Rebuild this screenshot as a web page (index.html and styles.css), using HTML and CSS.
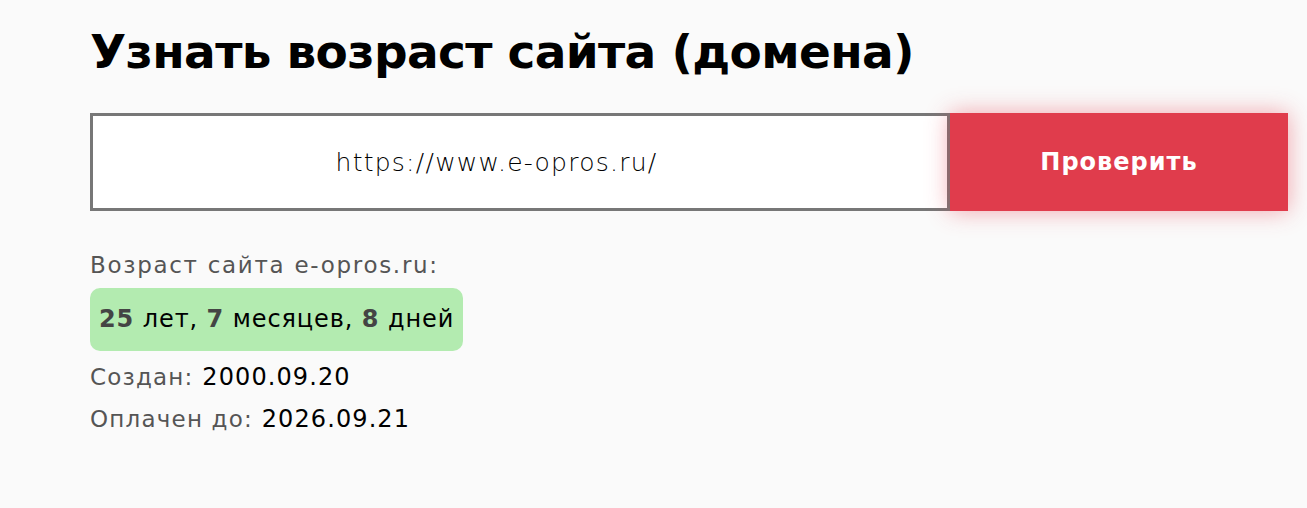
FILE: index.html
```html
<!DOCTYPE html>
<html>
<head>
  <title>Узнать возраст сайта</title>
  <meta charset="utf-8">
  <link rel="stylesheet" href="styles.css">
</head>
<body>
  <div class="page">
    <h1 class="title">Узнать возраст сайта (домена)</h1>

    <form class="check">
      <div class="field">https://www.e-opros.ru/</div>
      <button type="button" class="btn">Проверить</button>
    </form>

    <div class="result">
      <div class="label">Возраст сайта e-opros.ru:</div>
      <div class="age"><b>25</b> лет, <b>7</b> месяцев, <b>8</b> дней</div>
      <div class="row"><span class="label">Создан:</span> 2000.09.20</div>
      <div class="row"><span class="label">Оплачен до:</span> 2026.09.21</div>
    </div>
  </div>
</body>
</html>
```

FILE: styles.css
```css
body {
  margin: 0;
  background: #fafafa;
  font-family: "DejaVu Sans", "Noto Sans", sans-serif;
  color: #000;
}

.page {
  width: 1198px;
  padding: 22px 0 0 90px;
}

.title {
  margin: 0;
  font-size: 47px;
  line-height: 60px;
  font-weight: bold;
  letter-spacing: -0.65px;
}

.check {
  display: flex;
  height: 98px;
  margin: 31px 0 0;
}

.field {
  flex: 1;
  display: flex;
  align-items: center;
  justify-content: center;
  padding-right: 47px;
  background: #fff;
  border: 3px solid #777;
  font-size: 25px;
  font-weight: 300;
  letter-spacing: 1.25px;
  color: #000;
}

.btn {
  width: 338px;
  border: 0;
  background: #e03c4c;
  color: #fff;
  font-family: inherit;
  font-size: 24px;
  font-weight: bold;
  letter-spacing: 1px;
  box-shadow: 0 0 22px rgba(230, 60, 76, 0.45);
}

.result {
  margin-top: 38px;
}

.label {
  font-size: 23px;
  color: #555;
  line-height: 32px;
  letter-spacing: 1.7px;
}

.row .label {
  letter-spacing: 1.2px;
}

.age {
  display: inline-block;
  margin-top: 7px;
  padding: 15px 9px;
  background: #b3ebb0;
  border-radius: 10px;
  font-size: 24px;
  line-height: 33px;
  letter-spacing: 0.9px;
}

.age b {
  color: #444;
}

.row {
  font-size: 24px;
  line-height: 42px;
  letter-spacing: 1.1px;
}

.row:nth-child(3) {
  margin-top: 5px;
}
```
